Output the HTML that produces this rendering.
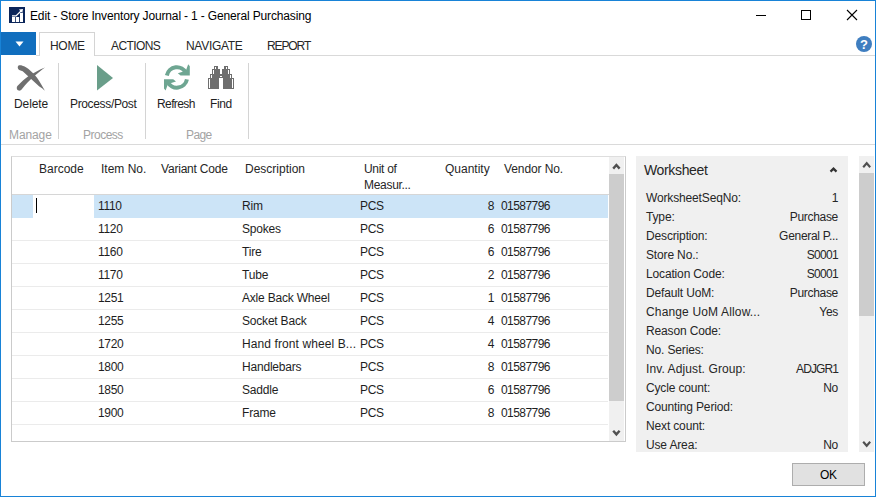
<!DOCTYPE html>
<html><head><meta charset="utf-8">
<style>
*{margin:0;padding:0;box-sizing:border-box}
html,body{width:876px;height:497px;overflow:hidden;background:#fff}
body{font-family:"Liberation Sans",sans-serif;font-size:12px;color:#1e1e1e;position:relative}
.a{position:absolute;white-space:nowrap;line-height:14px}
.ls{letter-spacing:-0.3px}
#win{position:absolute;left:0;top:0;width:876px;height:497px;border:1px solid #1883d7}
.hl{position:absolute;height:1px;background:#d4d4d4}
.vl{position:absolute;width:1px;background:#d4d4d4}
.grp{color:#a3a3a3}
.hdr{color:#262626}
.row{position:absolute;left:12px;width:596px;height:23px;border-bottom:1px solid #ebebeb}
.row .a{top:4px}
.fb .a{color:#262626}
.fbv{text-align:right}
</style></head><body>
<div id="win"></div>

<!-- title bar -->
<svg class="a" style="left:9px;top:7px" width="16" height="16" viewBox="0 0 16 16">
<rect width="16" height="16" fill="#0b255a"/>
<rect x="3" y="10" width="3.2" height="5" fill="#fff"/>
<rect x="7" y="10" width="3.1" height="5" fill="#fff"/>
<rect x="11" y="6" width="3" height="9" fill="#fff"/>
<path d="M3 8.9 L7 8.9 L12.3 3.7" stroke="#fff" stroke-width="1.3" fill="none"/>
<path d="M14 1.9 L9.9 2.6 L13.3 6 Z" fill="#fff"/>
</svg>
<div class="a" style="left:30px;top:9px;color:#000;letter-spacing:-0.15px">Edit - Store Inventory Journal - 1 - General Purchasing</div>
<div style="position:absolute;left:756px;top:15px;width:10px;height:1px;background:#000"></div>
<div style="position:absolute;left:801px;top:10px;width:10px;height:10px;border:1px solid #000"></div>
<svg class="a" style="left:846px;top:9px" width="12" height="12" viewBox="0 0 12 12"><path d="M1 1 L11 11 M11 1 L1 11" stroke="#000" stroke-width="1.1"/></svg>

<!-- tabs -->
<div style="position:absolute;left:1px;top:32px;width:35px;height:23px;background:#106ebe"></div>
<svg class="a" style="left:15px;top:41px" width="9" height="6" viewBox="0 0 9 6"><path d="M0.5 0.5 L8.5 0.5 L4.5 5.5 Z" fill="#fff"/></svg>
<div class="hl" style="left:36px;top:55px;width:839px;background:#d9d9d9"></div>
<div style="position:absolute;left:39px;top:32px;width:56px;height:24px;border:1px solid #d4d4d4;border-bottom:none;background:#fff"></div>
<div class="a ls" style="left:50px;top:39px;color:#262626">HOME</div>
<div class="a" style="left:111px;top:39px;color:#262626;letter-spacing:-0.6px">ACTIONS</div>
<div class="a ls" style="left:186px;top:39px;color:#262626">NAVIGATE</div>
<div class="a" style="left:267px;top:39px;color:#262626;letter-spacing:-1.1px">REPORT</div>
<svg class="a" style="left:856px;top:36px" width="16" height="16" viewBox="0 0 16 16"><circle cx="8" cy="8" r="8" fill="#3f7ec0"/><text x="8" y="13" text-anchor="middle" font-family="Liberation Sans" font-weight="bold" font-size="13" fill="#fff">?</text></svg>

<!-- ribbon -->
<svg class="a" style="left:10px;top:60px" width="40" height="35" viewBox="10 60 40 35">
<path d="M19.2 69.9 C17.5 69 17.3 66.5 18.5 65.6 C19.5 64.9 21.5 64.9 24.1 66.3 C30 69.5 36 75 41 84 L44.9 90.8 C43.5 89.2 41.5 87.8 39.3 86.4 L22.7 71.3 Z" fill="#6f6f6f"/>
<path d="M16.8 88.2 C16.8 87 17 86.5 17.4 86 C21 82 25 78.5 28.3 76.2 C34 72.5 39 69.8 45 67.4 C42 69.5 38 72.5 33.5 76.8 C29 81 26 84 22 89 C21 90.5 19.8 90.8 18.8 90.6 C17.5 90.3 16.8 89.4 16.8 88.2 Z" fill="#6f6f6f"/>
</svg>
<div class="a" style="left:14px;top:97px;letter-spacing:-0.1px">Delete</div>
<div class="a grp" style="left:9px;top:128px;letter-spacing:-0.1px">Manage</div>
<div class="vl" style="left:58px;top:63px;height:76px"></div>

<svg class="a" style="left:96px;top:64px" width="18" height="28" viewBox="96 64 18 28"><path d="M97 65 L97 90.5 L113 78 Z" fill="#6a9e8a"/></svg>
<div class="a" style="left:70px;top:97px;letter-spacing:-0.35px">Process/Post</div>
<div class="a grp" style="left:83px;top:128px;letter-spacing:-0.5px">Process</div>
<div class="vl" style="left:145px;top:63px;height:76px"></div>

<svg class="a" style="left:160px;top:60px" width="34" height="34" viewBox="160 60 34 34">
<path d="M166.87 75.5 A10.2 10.2 0 0 1 186.1 73.1" stroke="#6ea692" stroke-width="4" fill="none"/>
<path d="M188.2 64.3 L189.8 66.3 L189.8 75.6 L180.6 75.6 L177.8 73.3 L185.8 70.8 Z" fill="#6ea692"/>
<path d="M186.93 79.4 A10.2 10.2 0 0 1 167.7 81.8" stroke="#6ea692" stroke-width="4" fill="none"/>
<path d="M165.6 90.6 L164 88.6 L164 79.3 L173.2 79.3 L176 81.6 L168 84.1 Z" fill="#6ea692"/>
</svg>
<div class="a" style="left:157px;top:97px;letter-spacing:-0.6px">Refresh</div>

<svg class="a" style="left:206px;top:64px" width="30" height="27" viewBox="206 64 30 27">
<g fill="#6e6e6e">
<rect x="214" y="66" width="4" height="3"/>
<rect x="212" y="69" width="8" height="5"/>
<rect x="210" y="74" width="10" height="4"/>
<rect x="208" y="78" width="11" height="11"/>
<rect x="224" y="66" width="4" height="3"/>
<rect x="222" y="69" width="8" height="5"/>
<rect x="222" y="74" width="10" height="4"/>
<rect x="223" y="78" width="11" height="11"/>
<rect x="219" y="74" width="4" height="4"/>
</g>
<g fill="#fff">
<rect x="215" y="67" width="1" height="2"/>
<rect x="213" y="70" width="1" height="4"/>
<rect x="211" y="75" width="1" height="3"/>
<rect x="209" y="79" width="1" height="9"/>
<rect x="226" y="67" width="1" height="2"/>
<rect x="228" y="70" width="1" height="4"/>
<rect x="230" y="75" width="1" height="3"/>
<rect x="232" y="79" width="1" height="9"/>
<rect x="220" y="76" width="2" height="1"/>
</g>
</svg>
<div class="a" style="left:210px;top:97px;letter-spacing:-0.4px">Find</div>
<div class="a grp" style="left:186px;top:128px;letter-spacing:-0.6px">Page</div>
<div class="vl" style="left:248px;top:63px;height:76px"></div>
<div class="hl" style="left:1px;top:144px;width:874px;background:#dadada"></div>

<!-- grid -->
<div style="position:absolute;left:11px;top:156px;width:615px;height:286px;border:1px solid #cbcbcb;border-top-color:#dedede"></div>
<div class="hl" style="left:12px;top:194px;width:597px;background:#d6d6d6"></div>
<div class="a hdr" style="left:39px;top:162px">Barcode</div>
<div class="a hdr" style="left:101px;top:162px">Item No.</div>
<div class="a hdr" style="left:161px;top:162px;letter-spacing:-0.2px">Variant Code</div>
<div class="a hdr" style="left:245px;top:162px">Description</div>
<div class="a hdr ls" style="left:364px;top:162px;line-height:15.5px">Unit of<br>Measur...</div>
<div class="a hdr" style="left:445px;top:162px">Quantity</div>
<div class="a hdr" style="left:504px;top:162px;letter-spacing:-0.1px">Vendor No.</div>

<div id="rows"><div class="hl" style="left:12px;top:217px;width:596px;background:#ebebeb"></div><div class="hl" style="left:12px;top:240px;width:596px;background:#ebebeb"></div><div class="hl" style="left:12px;top:263px;width:596px;background:#ebebeb"></div><div class="hl" style="left:12px;top:286px;width:596px;background:#ebebeb"></div><div class="hl" style="left:12px;top:309px;width:596px;background:#ebebeb"></div><div class="hl" style="left:12px;top:332px;width:596px;background:#ebebeb"></div><div class="hl" style="left:12px;top:355px;width:596px;background:#ebebeb"></div><div class="hl" style="left:12px;top:378px;width:596px;background:#ebebeb"></div><div class="hl" style="left:12px;top:401px;width:596px;background:#ebebeb"></div><div class="hl" style="left:12px;top:424px;width:596px;background:#ebebeb"></div></div>
<div style="position:absolute;left:12px;top:195px;width:596px;height:23px;background:#cce4f7"></div>
<div style="position:absolute;left:33px;top:195px;width:61px;height:23px;background:#fff"></div>
<div style="position:absolute;left:36px;top:198px;width:1px;height:15px;background:#000"></div>

<div id="rowtxt"><div class="a ls" style="left:98px;top:199px">1110</div><div class="a" style="left:242px;top:199px;letter-spacing:-0.2px">Rim</div><div class="a ls" style="left:360px;top:199px">PCS</div><div class="a ls" style="left:474px;top:199px;width:20px;text-align:right">8</div><div class="a" style="left:501px;top:199px;letter-spacing:-0.55px">01587796</div><div class="a ls" style="left:98px;top:222px">1120</div><div class="a" style="left:242px;top:222px;letter-spacing:-0.2px">Spokes</div><div class="a ls" style="left:360px;top:222px">PCS</div><div class="a ls" style="left:474px;top:222px;width:20px;text-align:right">6</div><div class="a" style="left:501px;top:222px;letter-spacing:-0.55px">01587796</div><div class="a ls" style="left:98px;top:245px">1160</div><div class="a" style="left:242px;top:245px;letter-spacing:-0.2px">Tire</div><div class="a ls" style="left:360px;top:245px">PCS</div><div class="a ls" style="left:474px;top:245px;width:20px;text-align:right">6</div><div class="a" style="left:501px;top:245px;letter-spacing:-0.55px">01587796</div><div class="a ls" style="left:98px;top:268px">1170</div><div class="a" style="left:242px;top:268px;letter-spacing:-0.2px">Tube</div><div class="a ls" style="left:360px;top:268px">PCS</div><div class="a ls" style="left:474px;top:268px;width:20px;text-align:right">2</div><div class="a" style="left:501px;top:268px;letter-spacing:-0.55px">01587796</div><div class="a ls" style="left:98px;top:291px">1251</div><div class="a" style="left:242px;top:291px;letter-spacing:-0.2px">Axle Back Wheel</div><div class="a ls" style="left:360px;top:291px">PCS</div><div class="a ls" style="left:474px;top:291px;width:20px;text-align:right">1</div><div class="a" style="left:501px;top:291px;letter-spacing:-0.55px">01587796</div><div class="a ls" style="left:98px;top:314px">1255</div><div class="a" style="left:242px;top:314px;letter-spacing:-0.2px">Socket Back</div><div class="a ls" style="left:360px;top:314px">PCS</div><div class="a ls" style="left:474px;top:314px;width:20px;text-align:right">4</div><div class="a" style="left:501px;top:314px;letter-spacing:-0.55px">01587796</div><div class="a ls" style="left:98px;top:337px">1720</div><div class="a" style="left:242px;top:337px;letter-spacing:0.1px">Hand front wheel B...</div><div class="a ls" style="left:360px;top:337px">PCS</div><div class="a ls" style="left:474px;top:337px;width:20px;text-align:right">4</div><div class="a" style="left:501px;top:337px;letter-spacing:-0.55px">01587796</div><div class="a ls" style="left:98px;top:360px">1800</div><div class="a" style="left:242px;top:360px;letter-spacing:-0.2px">Handlebars</div><div class="a ls" style="left:360px;top:360px">PCS</div><div class="a ls" style="left:474px;top:360px;width:20px;text-align:right">8</div><div class="a" style="left:501px;top:360px;letter-spacing:-0.55px">01587796</div><div class="a ls" style="left:98px;top:383px">1850</div><div class="a" style="left:242px;top:383px;letter-spacing:-0.2px">Saddle</div><div class="a ls" style="left:360px;top:383px">PCS</div><div class="a ls" style="left:474px;top:383px;width:20px;text-align:right">6</div><div class="a" style="left:501px;top:383px;letter-spacing:-0.55px">01587796</div><div class="a ls" style="left:98px;top:406px">1900</div><div class="a" style="left:242px;top:406px;letter-spacing:-0.2px">Frame</div><div class="a ls" style="left:360px;top:406px">PCS</div><div class="a ls" style="left:474px;top:406px;width:20px;text-align:right">8</div><div class="a" style="left:501px;top:406px;letter-spacing:-0.55px">01587796</div></div>
<!-- grid scrollbar -->
<div style="position:absolute;left:609px;top:157px;width:15px;height:284px;background:#f0f0f0"></div>
<div style="position:absolute;left:609px;top:174px;width:15px;height:227px;background:#cdcdcd"></div>
<svg class="a" style="left:611px;top:162px" width="10" height="9" viewBox="0 0 10 9"><path d="M2.2 6.6 L5.4 3 L8.6 6.6" stroke="#505050" stroke-width="2.4" fill="none"/></svg>
<svg class="a" style="left:611px;top:428px" width="10" height="9" viewBox="0 0 10 9"><path d="M2.2 2.8 L5.4 6.4 L8.6 2.8" stroke="#505050" stroke-width="2.4" fill="none"/></svg>

<!-- factbox -->
<div class="fb" style="position:absolute;left:636px;top:156px;width:212px;height:296px;background:#f0f0f0;overflow:hidden">
<div class="a" style="left:8px;top:6px;font-size:14px;line-height:16px;letter-spacing:-0.35px;color:#262626">Worksheet</div>
<svg class="a" style="left:193px;top:10px" width="9" height="7" viewBox="0 0 9 7"><path d="M1.5 5.6 L4.5 2.6 L7.5 5.6" stroke="#333" stroke-width="2.2" fill="none"/></svg>
<div id="fbrows"><div class="a" style="left:10px;top:35px;letter-spacing:-0.15px">WorksheetSeqNo:</div><div class="a fbv" style="left:102px;width:100px;top:35px;letter-spacing:-0.3px">1</div><div class="a" style="left:10px;top:54px;letter-spacing:-0.15px">Type:</div><div class="a fbv" style="left:102px;width:100px;top:54px;letter-spacing:-0.3px">Purchase</div><div class="a" style="left:10px;top:73px;letter-spacing:-0.15px">Description:</div><div class="a fbv" style="left:102px;width:100px;top:73px;letter-spacing:-0.3px">General P...</div><div class="a" style="left:10px;top:92px;letter-spacing:-0.15px">Store No.:</div><div class="a fbv" style="left:102px;width:100px;top:92px;letter-spacing:-0.7px">S0001</div><div class="a" style="left:10px;top:111px;letter-spacing:-0.15px">Location Code:</div><div class="a fbv" style="left:102px;width:100px;top:111px;letter-spacing:-0.7px">S0001</div><div class="a" style="left:10px;top:130px;letter-spacing:-0.15px">Default UoM:</div><div class="a fbv" style="left:102px;width:100px;top:130px;letter-spacing:-0.3px">Purchase</div><div class="a" style="left:10px;top:149px;letter-spacing:0.15px">Change UoM Allow...</div><div class="a fbv" style="left:102px;width:100px;top:149px;letter-spacing:-0.3px">Yes</div><div class="a" style="left:10px;top:168px;letter-spacing:-0.15px">Reason Code:</div><div class="a fbv" style="left:102px;width:100px;top:168px;letter-spacing:-0.3px"></div><div class="a" style="left:10px;top:187px;letter-spacing:-0.15px">No. Series:</div><div class="a fbv" style="left:102px;width:100px;top:187px;letter-spacing:-0.3px"></div><div class="a" style="left:10px;top:206px;letter-spacing:0.1px">Inv. Adjust. Group:</div><div class="a fbv" style="left:102px;width:100px;top:206px;letter-spacing:-0.9px">ADJGR1</div><div class="a" style="left:10px;top:225px;letter-spacing:-0.15px">Cycle count:</div><div class="a fbv" style="left:102px;width:100px;top:225px;letter-spacing:-0.3px">No</div><div class="a" style="left:10px;top:244px;letter-spacing:-0.15px">Counting Period:</div><div class="a fbv" style="left:102px;width:100px;top:244px;letter-spacing:-0.3px"></div><div class="a" style="left:10px;top:263px;letter-spacing:-0.15px">Next count:</div><div class="a fbv" style="left:102px;width:100px;top:263px;letter-spacing:-0.3px"></div><div class="a" style="left:10px;top:282px;letter-spacing:-0.15px">Use Area:</div><div class="a fbv" style="left:102px;width:100px;top:282px;letter-spacing:-0.3px">No</div></div>
</div>

<!-- right scrollbar -->
<div style="position:absolute;left:859px;top:156px;width:15px;height:296px;background:#f0f0f0"></div>
<div style="position:absolute;left:859px;top:173px;width:15px;height:143px;background:#cdcdcd"></div>
<svg class="a" style="left:862px;top:160px" width="10" height="10" viewBox="0 0 10 10"><path d="M1.2 7.2 L4.7 3.2 L8.2 7.2" stroke="#505050" stroke-width="2.1" fill="none"/></svg>
<svg class="a" style="left:862px;top:439px" width="10" height="10" viewBox="0 0 10 10"><path d="M1.2 2.8 L4.7 6.8 L8.2 2.8" stroke="#505050" stroke-width="2.1" fill="none"/></svg>

<!-- OK -->
<div style="position:absolute;left:792px;top:463px;width:73px;height:23px;background:#e1e1e1;border:1px solid #adadad"></div>
<div class="a" style="left:820px;top:468px;color:#000;letter-spacing:-0.3px">OK</div>
</body></html>
